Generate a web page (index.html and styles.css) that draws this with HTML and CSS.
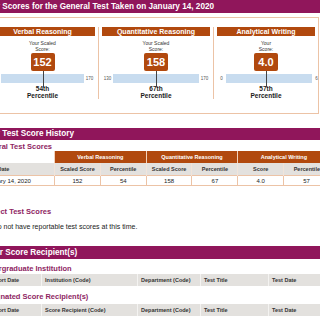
FILE: index.html
```html
<!DOCTYPE html>
<html lang="en">
<head>
  <meta charset="UTF-8">
  <title>GRE Scores</title>
  <link rel="stylesheet" href="styles.css">
</head>
<body>
  <div class="page">

    <!-- Current scores -->
    <div class="bar">Your Scores for the General Test Taken on January 14, 2020</div>
    <div class="scores">
      <div class="measure">
        <div class="m-head">Verbal Reasoning</div>
        <div class="m-label">Your Scaled<br>Score:</div>
        <div class="m-score">152</div>
        <div class="scale"><span>130</span><div class="track"></div><span>170</span></div>
        <div class="pct">54th<br>Percentile</div>
      </div>
      <div class="measure">
        <div class="m-head">Quantitative Reasoning</div>
        <div class="m-label">Your Scaled<br>Score:</div>
        <div class="m-score">158</div>
        <div class="scale"><span>130</span><div class="track"></div><span>170</span></div>
        <div class="pct">67th<br>Percentile</div>
      </div>
      <div class="measure">
        <div class="m-head">Analytical Writing</div>
        <div class="m-label">Your<br>Score:</div>
        <div class="m-score">4.0</div>
        <div class="scale scale-aw"><span>0</span><div class="track"></div><span>6</span></div>
        <div class="pct">57th<br>Percentile</div>
      </div>
    </div>

    <!-- History -->
    <div class="bar bar-history">Your Test Score History</div>
    <div class="sub">General Test Scores</div>
    <table class="hist">
      <colgroup>
        <col class="c-date"><col><col><col><col><col><col>
      </colgroup>
      <tr class="grp">
        <th class="blank"></th>
        <th colspan="2">Verbal Reasoning</th>
        <th colspan="2">Quantitative Reasoning</th>
        <th colspan="2">Analytical Writing</th>
      </tr>
      <tr class="hd">
        <th class="left">Test Date</th>
        <th>Scaled Score</th><th>Percentile</th>
        <th>Scaled Score</th><th>Percentile</th>
        <th>Score</th><th>Percentile</th>
      </tr>
      <tr class="row">
        <td class="left">January 14, 2020</td>
        <td>152</td><td>54</td>
        <td>158</td><td>67</td>
        <td>4.0</td><td>57</td>
      </tr>
    </table>

    <div class="sub sub-subject">Subject Test Scores</div>
    <p class="note">You do not have reportable test scores at this time.</p>

    <!-- Recipients -->
    <div class="bar bar-recip">Your Score Recipient(s)</div>
    <div class="sub sub-recip">Undergraduate Institution</div>
    <table class="recip">
      <colgroup>
        <col class="r1"><col class="r2"><col class="r3"><col class="r4"><col>
      </colgroup>
      <tr>
        <th>Report Date</th><th>Institution (Code)</th><th>Department (Code)</th><th>Test Title</th><th>Test Date</th>
      </tr>
    </table>
    <div class="sub sub-recip2">Designated Score Recipient(s)</div>
    <table class="recip recip2">
      <colgroup>
        <col class="r1"><col class="r2"><col class="r3"><col class="r4"><col>
      </colgroup>
      <tr>
        <th>Report Date</th><th>Score Recipient (Code)</th><th>Department (Code)</th><th>Test Title</th><th>Test Date</th>
      </tr>
    </table>

  </div>
</body>
</html>
```

FILE: styles.css
```css
html, body {
  margin: 0;
  overflow: hidden;
  background-color: #ffffff;
}

body {
  font-family: "Liberation Sans", Arial, sans-serif;
  color: #222;
}

.page {
  margin-left: -20px;
  width: 345px;
}

.bar {
  background-color: #90165b;
  color: #fff;
  font-weight: bold;
  font-size: 8.2px;
  height: 13px;
  line-height: 13px;
  padding-left: 2px;
}

/* Score cards */
.scores {
  margin-top: 4px;
  width: 331px;
  border: 1px solid #ecc3a6;
  padding: 9px 0 14px 6px;
  display: grid;
  grid-template-columns: 111px 115px 105px;
}

.measure {
  display: flex;
  flex-direction: column;
  align-items: center;
  text-align: center;
  padding: 0 3px;
}

.measure + .measure {
  border-left: 1px solid #ecc3a6;
}

.m-head {
  align-self: stretch;
  background-color: #b1490e;
  color: #fff;
  font-weight: bold;
  font-size: 7px;
  height: 9px;
  line-height: 9px;
}

.m-label {
  margin-top: 5px;
  font-size: 5px;
  line-height: 5.5px;
  color: #333;
}

.m-score {
  position: relative;
  margin-top: 1px;
  width: 24px;
  height: 18px;
  line-height: 18px;
  background-color: #b1490e;
  color: #fff;
  font-weight: bold;
  font-size: 11px;
  border-radius: 2px;
}

.m-score::after {
  content: "";
  position: absolute;
  left: 50%;
  top: 100%;
  width: 1px;
  height: 16px;
  background-color: #444;
}

.scale {
  align-self: stretch;
  display: flex;
  align-items: center;
  margin-top: 3px;
  font-size: 4.5px;
  line-height: 9px;
  color: #555;
}

.scale span {
  width: 11px;
}

.scale-aw {
  margin-right: -6px;
}

.scale-aw span {
  width: 9px;
}

.track {
  flex: 1;
  height: 9px;
  background-color: #c8dcef;
}

.pct {
  margin-top: 3px;
  font-weight: bold;
  font-size: 6.5px;
  line-height: 6.5px;
  color: #1a1a1a;
}

/* History */
.bar-history {
  margin-top: 14px;
  height: 12px;
  line-height: 12px;
}

.sub {
  color: #8e2462;
  font-weight: bold;
  font-size: 7.5px;
  line-height: 9px;
  margin-top: 2px;
}

table {
  border-collapse: collapse;
  table-layout: fixed;
}

.hist {
  width: 350px;
  font-size: 5.5px;
}

.hist .c-date {
  width: 74px;
}

.hist th, .hist td {
  text-align: center;
  padding: 0;
}

.hist .left {
  text-align: left;
  padding-left: 4px;
}

.grp th {
  height: 12px;
  background-color: #b1490e;
  color: #fff;
  border-left: 1px solid #f3d2bb;
}

.grp th.blank {
  background-color: #fff;
  border: none;
}

.hd th {
  height: 12px;
  background-color: #e3e1de;
  color: #333;
  border-left: 1px solid #f1e4da;
}

.row td {
  height: 9px;
  font-size: 6px;
  border: 1px solid #ecc3a6;
}

.row td.left {
  border-left: none;
}

/* Subject scores */
.sub-subject {
  margin-top: 21px;
}

.note {
  margin: 6px 0 0;
  font-size: 7px;
  line-height: 9px;
  color: #222;
}

/* Recipients */
.bar-recip {
  margin-top: 15px;
  padding-left: 5px;
}

.sub-recip {
  margin-top: 5px;
}

.sub-recip2 {
  margin-top: 6px;
}

.recip {
  margin-top: 1px;
  width: 350px;
  font-size: 5.5px;
}

.recip2 {
  margin-top: 3px;
}

.recip .r1 { width: 61px; }
.recip .r2 { width: 96px; }
.recip .r3 { width: 63px; }
.recip .r4 { width: 68px; }

.recip th {
  height: 12px;
  padding: 0 0 0 3px;
  text-align: left;
  background-color: #e3e1de;
  color: #333;
  border-left: 1px solid #f4f3f1;
}

.recip th:first-child {
  padding-left: 7px;
}
```
